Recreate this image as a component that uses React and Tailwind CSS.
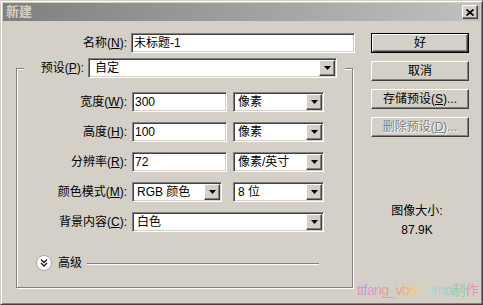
const sunken =
  "bg-white border border-t-[#808080] border-l-[#808080] border-b-white border-r-white shadow-[inset_1px_1px_0_#404040,inset_-1px_-1px_0_#d4d0c8]";
const raised =
  "bg-[#d4d0c8] border border-t-white border-l-white border-r-[#404040] border-b-[#404040] shadow-[inset_-1px_-1px_0_#808080,inset_1px_1px_0_#d4d0c8]";

function ArrowBtn() {
  return (
    <div className={`${raised} w-[16px] h-[16px] my-[1px] mr-[1px] flex items-center justify-center flex-none`}>
      <svg width="7" height="4" viewBox="0 0 7 4">
        <path d="M0 0h7L3.5 4z" fill="#000" />
      </svg>
    </div>
  );
}

function Select({ w, pad = "pl-[4px]", children }) {
  return (
    <div className={`${sunken} ${w} h-[20px] flex items-center flex-none`}>
      <span className={`flex-1 ${pad} whitespace-nowrap`}>{children}</span>
      <ArrowBtn />
    </div>
  );
}

function Field({ w, children }) {
  return (
    <div className={`${sunken} ${w} h-[20px] flex items-center pl-[1px] flex-none`}>
      {children}
    </div>
  );
}

function Label({ text, k, rest = "):" }) {
  return (
    <span className="whitespace-nowrap">
      {text}(<u>{k}</u>{rest}
    </span>
  );
}

function Row({ label, children }) {
  return (
    <div className="flex items-center h-[20px]">
      <div className="w-[103px] text-right">{label}</div>
      <div className="ml-[5px] flex items-center">{children}</div>
    </div>
  );
}

function Button({ children, def, disabled }) {
  const inner = (
    <div
      className={`${raised} h-full w-full flex items-center justify-center ${
        disabled ? "text-[#808080] [text-shadow:1px_1px_0_#ffffff]" : ""
      }`}
    >
      {children}
    </div>
  );
  if (def)
    return <div className="w-[98px] h-[20px] border border-black">{inner}</div>;
  return <div className="w-[98px] h-[20px]">{inner}</div>;
}

const mark = [
  ["t", "#e58fbf"], ["t", "#d496d6"], ["f", "#c09ae0"], ["a", "#e397c0"],
  ["n", "#e896b0"], ["g", "#e69c9c"], ["_", "#e8a88e"], ["v", "#eaa97c"],
  ["b", "#f0b67a"], ["6", "#f0c878"], ["©", "#e0d8a0"], ["o", "#b6dcc6"],
  ["m", "#a6d0dc"], ["o", "#9ec6dc"], ["制", "#92cfa8"], ["作", "#e396b4"],
];

export default function App() {
  return (
    <div
      className="relative overflow-hidden w-[483px] h-[305px] bg-[#d4d0c8] border border-t-[#d4d0c8] border-l-[#d4d0c8] border-r-[#404040] border-b-[#404040] shadow-[inset_1px_1px_0_#ffffff,inset_-1px_-1px_0_#808080] p-[2px] text-[12px] leading-[14px] text-black"
      style={{ fontFamily: '"Liberation Sans", "Noto Sans CJK SC", sans-serif' }}
    >
      {/* title bar */}
      <div className="h-[18px] flex items-center justify-between bg-gradient-to-r from-[#808080] to-[#c0c0c0] pl-[3px] pr-[2px]">
        <span className="font-bold text-[13px] text-[#d4d0c8]">新建</span>
        <div className={`${raised} w-[16px] h-[14px] flex items-center justify-center`}>
          <svg width="8" height="7" viewBox="0 0 8 7">
            <path d="M0.5 0.5L7.5 6.5M7.5 0.5L0.5 6.5" stroke="#000" strokeWidth="1.8" />
          </svg>
        </div>
      </div>

      <div className="flex">
        {/* left column */}
        <div className="w-[368px] flex-none">
          <div className="flex items-center mt-[12px]">
            <div className="w-[124px] text-right">
              <Label text="名称" k="N" />
            </div>
            <Field w="w-[224px] ml-[4px]">
              <span className="pl-[1px]">未标题-1</span>
            </Field>
          </div>

          <fieldset className="ml-[13px] mt-[5px] w-[337px] border border-[#808080] shadow-[inset_1px_1px_0_#ffffff,1px_1px_0_#ffffff] px-[7px] pt-[14px] pb-[16px]">
            <legend className="bg-[#d4d0c8] pl-[11px] pr-[8px]">
              <div className="flex items-center">
                <div className="w-[49px] text-right">
                  <Label text="预设" k="P" />
                </div>
                <div className="ml-[4px]">
                  <Select w="w-[249px]" pad="pl-[6px]">自定</Select>
                </div>
              </div>
            </legend>

            <div className="flex flex-col gap-[10px]">
              <Row label={<Label text="宽度" k="W" />}>
                <Field w="w-[95px]">
                  <span className="pl-[1px]">300</span>
                </Field>
                <div className="ml-[6px]">
                  <Select w="w-[91px]">像素</Select>
                </div>
              </Row>
              <Row label={<Label text="高度" k="H" />}>
                <Field w="w-[95px]">
                  <span className="pl-[1px]">100</span>
                </Field>
                <div className="ml-[6px]">
                  <Select w="w-[91px]">像素</Select>
                </div>
              </Row>
              <Row label={<Label text="分辨率" k="R" />}>
                <Field w="w-[95px]">
                  <span className="pl-[1px]">72</span>
                </Field>
                <div className="ml-[6px]">
                  <Select w="w-[91px]">像素/英寸</Select>
                </div>
              </Row>
              <Row label={<Label text="颜色模式" k="M" />}>
                <Select w="w-[90px]">RGB 颜色</Select>
                <div className="ml-[11px]">
                  <Select w="w-[91px]">8 位</Select>
                </div>
              </Row>
              <Row label={<Label text="背景内容" k="C" />}>
                <Select w="w-[192px]">白色</Select>
              </Row>
            </div>

            <div className="flex items-center mt-[23px] ml-[12px] h-[16px]">
              <svg width="16" height="16" viewBox="0 0 16 16" className="flex-none">
                <circle cx="8" cy="8" r="7.5" fill="#fbfbfb" stroke="#a8a8a8" />
                <path d="M5 4.5l3 3 3-3M5 8l3 3 3-3" fill="none" stroke="#202020" strokeWidth="1.4" />
              </svg>
              <span className="ml-[6px] w-[24px] whitespace-nowrap">高级</span>
              <div className="ml-[5px] w-[232px] h-0 border-t border-[#808080] shadow-[0_1px_0_#ffffff]" />
            </div>
          </fieldset>
        </div>

        {/* right column */}
        <div className="flex flex-col pt-[12px]">
          <div className="flex flex-col gap-[8px]">
            <Button def>好</Button>
            <Button>取消</Button>
            <Button>
              <Label text="存储预设" k="S" rest=")..." />
            </Button>
            <Button disabled>
              <Label text="删除预设" k="D" rest=")..." />
            </Button>
          </div>
          <div className="w-[92px] text-center mt-[67px]">图像大小:</div>
          <div className="w-[92px] text-center mt-[5px]">87.9K</div>
        </div>
      </div>

      {/* watermark */}
      <div className="absolute left-[356px] top-[282px] text-[14px] leading-none whitespace-nowrap tracking-[-0.6px]">
        {mark.map(([c, col], i) => (
          <span key={i} style={{ color: col }}>
            {c}
          </span>
        ))}
      </div>
    </div>
  );
}
